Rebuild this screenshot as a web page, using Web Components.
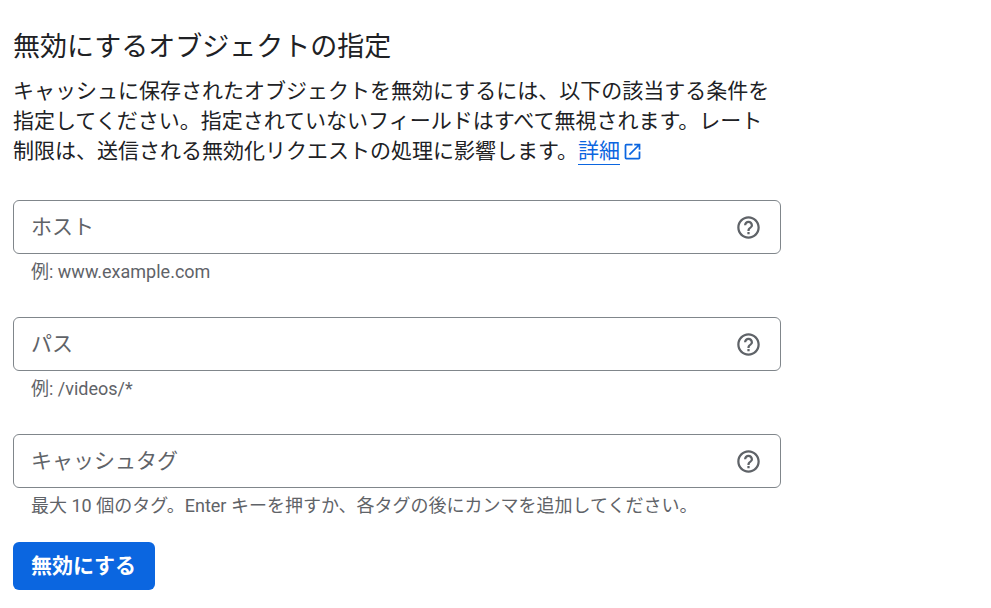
<!DOCTYPE html>
<html lang="ja">
<head>
<meta charset="utf-8">
<title>無効にするオブジェクトの指定</title>
<style>
    body {
        margin: 0;
        background: #fff;
        color: #202124;
        font-family: Roboto, "Noto Sans CJK JP", sans-serif;
    }
</style>
</head>
<body>
<invalidation-form>
    <span slot="title">無効にするオブジェクトの指定</span>
    <span slot="description">キャッシュに保存されたオブジェクトを無効にするには、以下の該当する条件を指定してください。指定されていないフィールドはすべて無視されます。レート制限は、送信される無効化リクエストの処理に影響します。</span>
    <external-link slot="link">詳細</external-link>
    <text-field label="ホスト">例: www.example.com</text-field>
    <text-field label="パス">例: /videos/*</text-field>
    <text-field label="キャッシュタグ">最大 10 個のタグ。Enter キーを押すか、各タグの後にカンマを追加してください。</text-field>
    <primary-button slot="action">無効にする</primary-button>
</invalidation-form>

<script>
class InvalidationForm extends HTMLElement {
    constructor() {
        super();
        this.attachShadow({ mode: 'open' });
        this.shadowRoot.innerHTML = `
            <style>
                :host {
                    display: block;
                    width: 768px;
                    padding: 29px 0 0 13px;
                }
                h1 {
                    margin: 0;
                    font-size: 27px;
                    font-weight: 400;
                    line-height: 36px;
                }
                p {
                    margin: 11px 0 0;
                    font-size: 21px;
                    line-height: 30px;
                }
                .fields {
                    display: flex;
                    flex-direction: column;
                    gap: 27px;
                    margin-top: 34px;
                }
                .action {
                    display: flex;
                    margin-top: 18px;
                }
            </style>
            <h1><slot name="title"></slot></h1>
            <p><slot name="description"></slot><slot name="link"></slot></p>
            <div class="fields"><slot></slot></div>
            <div class="action"><slot name="action"></slot></div>
        `;
    }
}

class ExternalLink extends HTMLElement {
    constructor() {
        super();
        this.attachShadow({ mode: 'open' });
        // inline element, so no whitespace around the markup
        this.shadowRoot.innerHTML = `<style>
                :host {
                    display: inline;
                    white-space: nowrap;
                }
                a {
                    padding-bottom: 1px;
                    border-bottom: 1px solid #0b66e0;
                    color: #0b66e0;
                    text-decoration: none;
                }
                svg {
                    width: 21px;
                    height: 21px;
                    margin-left: 2px;
                    fill: #0b66e0;
                    vertical-align: -4px;
                }
            </style><a href="#"><slot></slot></a><svg viewBox="0 0 24 24"><path d="M19 19H5V5h7V3H5a2 2 0 0 0-2 2v14a2 2 0 0 0 2 2h14c1.1 0 2-.9 2-2v-7h-2v7zM14 3v2h3.59l-9.83 9.83 1.41 1.41L19 6.41V10h2V3h-7z"/></svg>`;
    }
}

class TextField extends HTMLElement {
    constructor() {
        super();
        this.attachShadow({ mode: 'open' });
    }

    connectedCallback() {
        this.shadowRoot.innerHTML = `
            <style>
                :host {
                    display: block;
                }
                .box {
                    display: flex;
                    align-items: center;
                    justify-content: space-between;
                    box-sizing: border-box;
                    height: 54px;
                    padding: 0 18px 0 17px;
                    border: 1px solid #80868b;
                    border-radius: 6px;
                    color: #5f6368;
                    font-size: 21px;
                    line-height: 30px;
                }
                svg {
                    width: 27px;
                    height: 27px;
                    margin-top: 1px;
                    fill: #5f6368;
                }
                .hint {
                    height: 36px;
                    padding: 0 18px;
                    color: #5f6368;
                    font-size: 18px;
                    line-height: 36px;
                }
            </style>
            <div class="box">
                <span>${this.getAttribute('label')}</span>
                <svg viewBox="0 0 24 24"><path d="M11 18h2v-2h-2v2zm1-16C6.48 2 2 6.48 2 12s4.48 10 10 10 10-4.48 10-10S17.52 2 12 2zm0 18c-4.41 0-8-3.59-8-8s3.59-8 8-8 8 3.59 8 8-3.59 8-8 8zm0-14c-2.21 0-4 1.79-4 4h2c0-1.1.9-2 2-2s2 .9 2 2c0 2-3 1.75-3 5h2c0-2.25 3-2.5 3-5 0-2.21-1.79-4-4-4z"/></svg>
            </div>
            <div class="hint"><slot></slot></div>
        `;
    }
}

class PrimaryButton extends HTMLElement {
    constructor() {
        super();
        this.attachShadow({ mode: 'open' });
        this.shadowRoot.innerHTML = `
            <style>
                :host {
                    display: block;
                }
                button {
                    width: 142px;
                    height: 48px;
                    padding: 0 1px 0 0;
                    border: 0;
                    border-radius: 6px;
                    background: #0b66e0;
                    color: #fff;
                    font: 700 21px/46px Roboto, "Noto Sans CJK JP", sans-serif;
                }
            </style>
            <button type="button"><slot></slot></button>
        `;
    }
}

customElements.define('invalidation-form', InvalidationForm);
customElements.define('external-link', ExternalLink);
customElements.define('text-field', TextField);
customElements.define('primary-button', PrimaryButton);
</script>
</body>
</html>
